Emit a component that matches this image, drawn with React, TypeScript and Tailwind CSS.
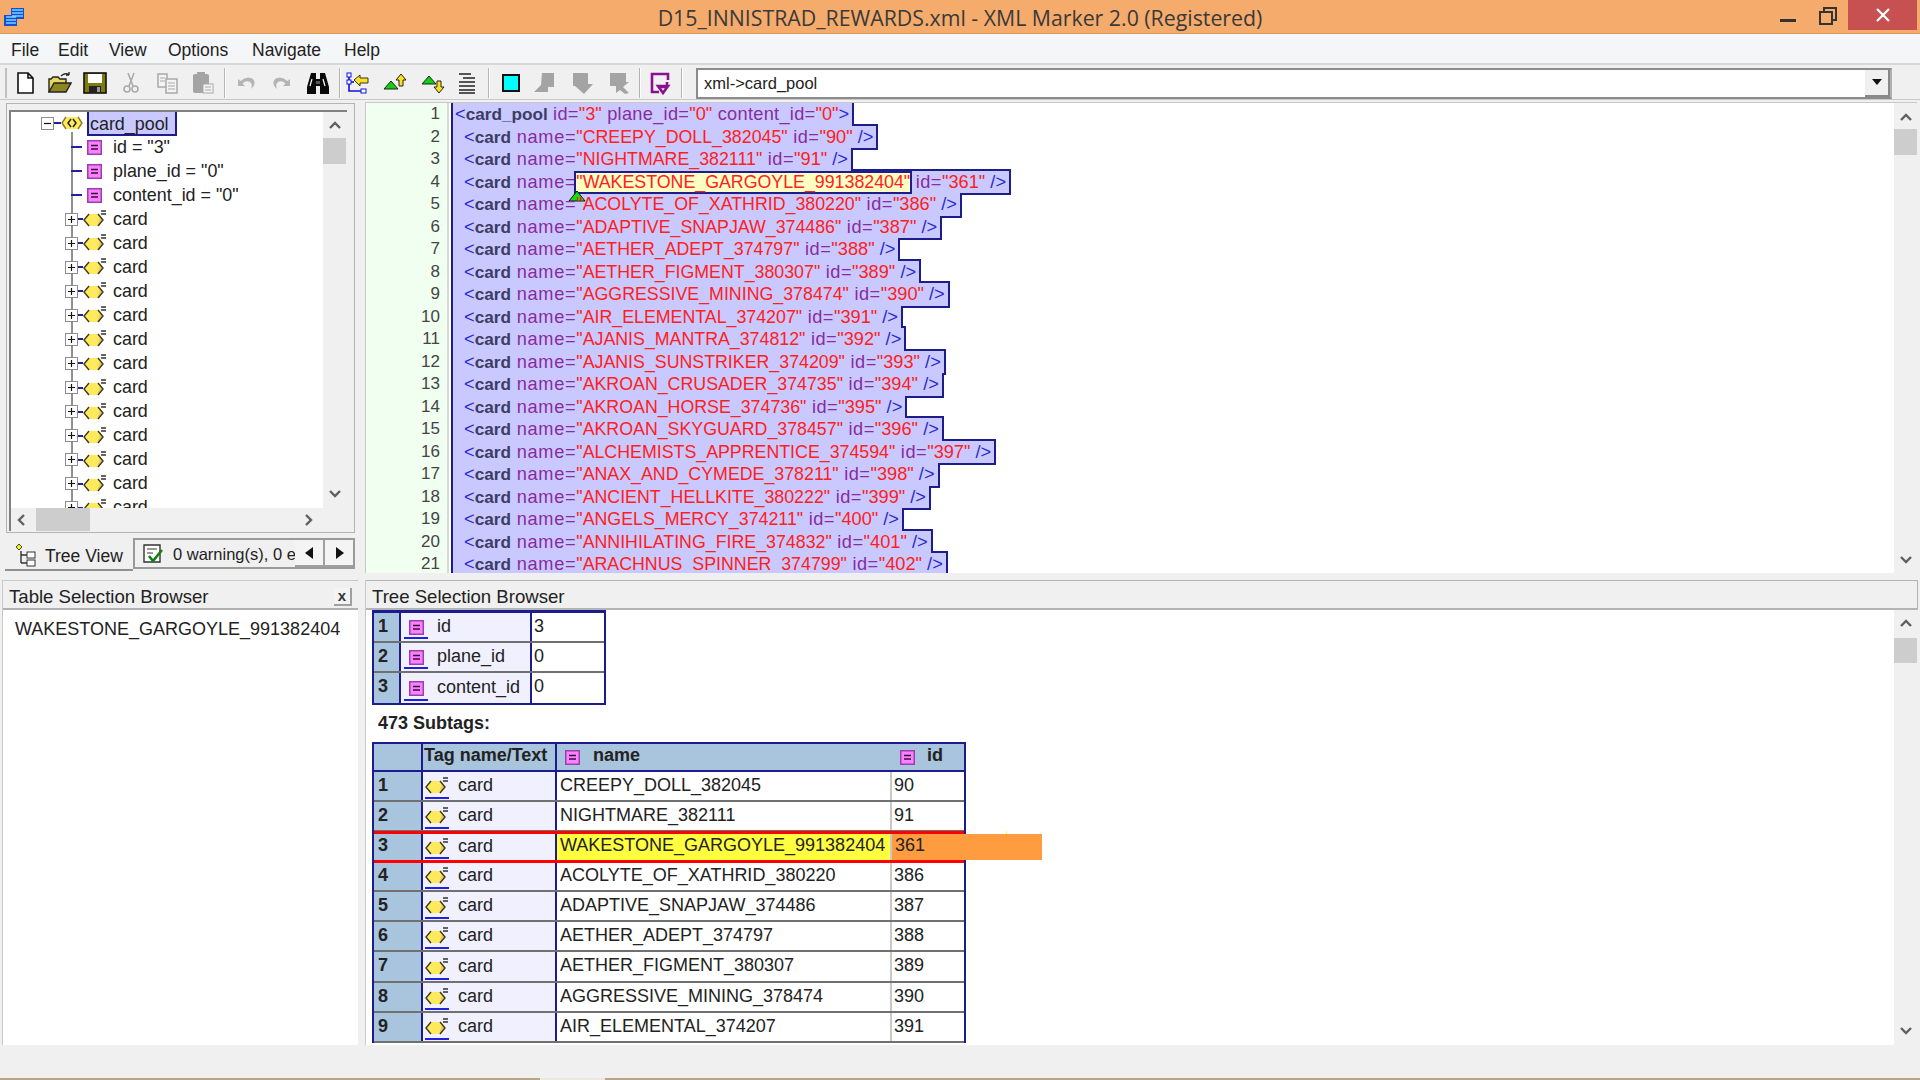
import React from 'react';

const editorRows = [
    ['CREEPY_DOLL_382045', '90'],
    ['NIGHTMARE_382111', '91'],
    ['WAKESTONE_GARGOYLE_991382404', '361'],
    ['ACOLYTE_OF_XATHRID_380220', '386'],
    ['ADAPTIVE_SNAPJAW_374486', '387'],
    ['AETHER_ADEPT_374797', '388'],
    ['AETHER_FIGMENT_380307', '389'],
    ['AGGRESSIVE_MINING_378474', '390'],
    ['AIR_ELEMENTAL_374207', '391'],
    ['AJANIS_MANTRA_374812', '392'],
    ['AJANIS_SUNSTRIKER_374209', '393'],
    ['AKROAN_CRUSADER_374735', '394'],
    ['AKROAN_HORSE_374736', '395'],
    ['AKROAN_SKYGUARD_378457', '396'],
    ['ALCHEMISTS_APPRENTICE_374594', '397'],
    ['ANAX_AND_CYMEDE_378211', '398'],
    ['ANCIENT_HELLKITE_380222', '399'],
    ['ANGELS_MERCY_374211', '400'],
    ['ANNIHILATING_FIRE_374832', '401'],
    ['ARACHNUS_SPINNER_374799', '402'],
];

const menuItems = [
    { name: 'File', cls: 'w-[47px]' },
    { name: 'Edit', cls: 'w-[51px]' },
    { name: 'View', cls: 'w-[59px]' },
    { name: 'Options', cls: 'w-[84px]' },
    { name: 'Navigate', cls: 'w-[92px]' },
    { name: 'Help', cls: 'w-[50px]' },
];

function Chevron({ dir }: { dir: 'up' | 'down' | 'left' | 'right' }) {
    const d = {
        up: 'M2 9 L7 4 L12 9',
        down: 'M2 5 L7 10 L12 5',
        left: 'M9 2 L4 7 L9 12',
        right: 'M5 2 L10 7 L5 12',
    }[dir];
    return (
        <svg width="14" height="14" viewBox="0 0 14 14">
            <path d={d} fill="none" stroke="#606060" strokeWidth="2.4" />
        </svg>
    );
}

function AttrIcon() {
    return (
        <svg width="15" height="15" viewBox="0 0 15 15" className="shrink-0">
            <rect x="0.75" y="0.75" width="13.5" height="13.5" fill="#ff80ff" stroke="#9a3fb0" strokeWidth="1.5" />
            <path d="M4 5.5 H11 M4 9 H11" stroke="#30103a" strokeWidth="1.5" />
        </svg>
    );
}

function TagIcon() {
    return (
        <svg width="24" height="20" viewBox="0 0 24 20" className="shrink-0">
            <path d="M1 11 L6 5 H15 L20 11 L15 17 H6 Z" fill="#ffe95c" />
            <path d="M14 17 L20 11 L17 8 Z" fill="#f6c860" />
            <path d="M6 5 L1 11 L6 17 M15 5 L20 11 L15 17" fill="none" stroke="#3a3a20" strokeWidth="1.4" />
            <path d="M18 2 H23 M18 5 H23" stroke="#333" strokeWidth="1.4" />
        </svg>
    );
}

function RootIcon() {
    return (
        <svg width="22" height="18" viewBox="0 0 22 18" className="shrink-0">
            <path d="M1 9 L6 3 H16 L21 9 L16 15 H6 Z" fill="#ffe95c" />
            <path d="M5 3 L1 9 L5 15 M17 3 L21 9 L17 15" fill="none" stroke="#8a7a20" strokeWidth="1.4" />
            <path d="M10 5 L7 9 L10 13 M12 5 L15 9 L12 13" fill="none" stroke="#222" strokeWidth="1.5" />
        </svg>
    );
}

function PlusBox({ minus }: { minus?: boolean }) {
    return (
        <svg width="13" height="13" viewBox="0 0 13 13" className="shrink-0">
            <rect x="0.5" y="0.5" width="12" height="12" fill="#fff" stroke="#8c8c8c" />
            <path d={minus ? 'M3 6.5 H10' : 'M3 6.5 H10 M6.5 3 V10'} stroke="#111" strokeWidth="1.2" />
        </svg>
    );
}

function ToolIcon({ kind, cls }: { kind: string; cls: string }) {
    const gray = '#a8a8a8';
    return (
        <svg width="24" height="24" viewBox="0 0 24 24" className={cls + ' shrink-0'}>
            {kind === 'new' && <path d="M5 2 H15 L20 7 V22 H5 Z M15 2 V7 H20" fill="#fff" stroke="#111" strokeWidth="1.6" />}
            {kind === 'open' && (
                <>
                    <path d="M1 21 V8 H3 L5 6 H10 L12 8 H18 V12" fill="#e8d85c" stroke="#222" strokeWidth="1.4" />
                    <path d="M1 21 L6 12 H23 L18 21 Z" fill="#8d8620" stroke="#222" strokeWidth="1.4" />
                    <path d="M13 5 Q17 1 21 4 M21 4 V1 M21 4 H18" fill="none" stroke="#222" strokeWidth="1.3" />
                </>
            )}
            {kind === 'save' && (
                <>
                    <rect x="1" y="2" width="22" height="20" fill="#7f7a10" stroke="#111" strokeWidth="1.6" />
                    <rect x="5" y="3" width="14" height="9" fill="#fff" />
                    <rect x="6" y="15" width="12" height="7" fill="#222" />
                    <rect x="14" y="16" width="3" height="5" fill="#9a9a9a" />
                </>
            )}
            {kind === 'cut' && (
                <>
                    <path d="M9 2 L14 15 M15 2 L10 15" stroke={gray} strokeWidth="1.5" fill="none" />
                    <circle cx="8" cy="18" r="3" fill="none" stroke={gray} strokeWidth="1.5" />
                    <circle cx="16" cy="18" r="3" fill="none" stroke={gray} strokeWidth="1.5" />
                </>
            )}
            {kind === 'copy' && (
                <>
                    <path d="M2 3 H11 V16 H2 Z" fill="#f4f4f4" stroke={gray} strokeWidth="1.5" />
                    <path d="M10 8 H21 V22 H10 Z" fill="#f4f4f4" stroke={gray} strokeWidth="1.5" />
                    <path d="M4 7 H9 M4 10 H9 M12 12 H19 M12 15 H19 M12 18 H19" stroke={gray} strokeWidth="1.2" />
                </>
            )}
            {kind === 'paste' && (
                <>
                    <rect x="2" y="3" width="16" height="19" rx="2" fill="#a4a4a4" />
                    <rect x="6" y="1" width="8" height="4" fill="#a4a4a4" />
                    <rect x="12" y="13" width="10" height="9" fill="#f4f4f4" stroke={gray} />
                    <path d="M14 16 H20 M14 19 H20" stroke={gray} />
                </>
            )}
            {kind === 'undo' && <path d="M4 8 V15 H11 L8.5 12.5 Q12 9 16 11 Q19 13 17 18 Q23 13 19 8 Q13 4 6.5 10 Z" fill="#b4b4b4" />}
            {kind === 'redo' && <path d="M20 8 V15 H13 L15.5 12.5 Q12 9 8 11 Q5 13 7 18 Q1 13 5 8 Q11 4 17.5 10 Z" fill="#b4b4b4" />}
            {kind === 'find' && (
                <>
                    <path d="M5 2 H10 V8 H14 V2 H19 L23 16 V23 H14 V15 H10 V23 H1 V16 Z" fill="#0a0a0a" />
                    <path d="M10 10 H14 V13 H10 Z" fill="#555" />
                    <path d="M4 15 L6 8 M17 8 L19 15" stroke="#fff" strokeWidth="1.2" />
                </>
            )}
            {kind === 'treearrow' && (
                <>
                    <path d="M3 4 V20 H15" fill="none" stroke="#1010e0" strokeWidth="1.6" />
                    <path d="M3 11 H8" stroke="#1010e0" strokeWidth="1.6" />
                    <rect x="1" y="2" width="4" height="4" fill="#fff" stroke="#1010e0" />
                    <rect x="1" y="9" width="4" height="4" fill="#fff" stroke="#1010e0" />
                    <rect x="15" y="18" width="5" height="4" fill="#fff" stroke="#1010e0" />
                    <path d="M8 9 L14 4 V7 H22 V12 H14 V15 Z" fill="#ffe020" stroke="#333" />
                </>
            )}
            {kind === 'up' && (
                <>
                    <path d="M1 18 L8 10 L15 18 Z" fill="#10d010" stroke="#222" />
                    <path d="M18 3 L23 9 H20 V15 H16 V9 H13 Z" fill="#ffe020" stroke="#222" />
                </>
            )}
            {kind === 'down' && (
                <>
                    <path d="M1 13 L8 5 L15 13 Z" fill="#10d010" stroke="#222" />
                    <path d="M18 22 L23 16 H20 V10 H16 V16 H13 Z" fill="#ffe020" stroke="#222" />
                </>
            )}
            {kind === 'lines' && <path d="M4 3 H16 M8 7 H20 M4 11 H20 M4 15 H20 M4 19 H20 M4 22 H20" stroke="#222" strokeWidth="1.7" />}
            {kind === 'cyan' && <rect x="4" y="4" width="16" height="16" fill="#00ffff" stroke="#111" strokeWidth="2" />}
            {kind === 'g1' && <path d="M10 2 H22 V16 H16 V21 H2 L9 14 Z" fill="#a4a4a4" />}
            {kind === 'g2' && <path d="M2 2 H17 V13 H22 L13 23 L4 15 L2 15 Z" fill="#a4a4a4" />}
            {kind === 'g3' && <path d="M2 2 H18 V11 H21 L15 16 L21 22 L17 23 L12 19 L8 22 V15 H2 Z" fill="#a4a4a4" />}
            {kind === 'purple' && <path d="M20 9 V3 H4 V21 H11 M11 16 L19 16 V11 M15 22 L20 15 H10 Z" fill="none" stroke="#8a1090" strokeWidth="2.6" />}
        </svg>
    );
}

function Sep({ cls }: { cls: string }) {
    return <div className={'w-[2px] h-[30px] bg-[#b4b4b4] border-r border-white shrink-0 ' + cls} />;
}

function EditorLine({ name, id, selected }: { name: string; id: string; selected?: boolean }) {
    return (
        <div className="relative w-fit h-[22.5px] pl-[11px] pr-[3px] leading-[22.5px] whitespace-pre">
            <span className="absolute inset-0 shadow-[0_0_0_2px_#1c1c8c] z-0" />
            <span className="absolute inset-0 bg-[#c9c9ff] z-10" />
            <span className="relative z-20">
                <span className="text-[#2a2ad0]">&lt;</span>
                <span className="font-bold text-[#3c3c64] text-[17.2px]">card</span>
                <span className="text-[#8a2aa0] tracking-[0.7px]"> name=</span>
                {selected ? (
                    <span className="relative">
                        <span className="absolute left-[-2px] right-[-2px] top-[-1px] bottom-[-2px] bg-[#ffffc4] border-2 border-[#1c1c8c]" />
                        <span className="relative text-[#ff2020] text-[17.8px]">"{name}"</span>
                        <svg width="18" height="12" viewBox="0 0 18 12" className="absolute left-[-8px] top-[18px]">
                            <path d="M1 11 L9 1 L17 11 Z" fill="#10e010" stroke="#111" />
                        </svg>
                    </span>
                ) : (
                    <span className="text-[#ff2020] text-[17.8px]">"{name}"</span>
                )}
                <span className="text-[#8a2aa0] tracking-[0.5px]"> id=</span>
                <span className="text-[#ff2020]">"{id}"</span>
                <span className="text-[#2a2ad0]"> /&gt;</span>
            </span>
        </div>
    );
}

function AttrRow({ n, name, value, last }: { n: number; name: string; value: string; last?: boolean }) {
    return (
        <div className={'flex h-[30px] items-stretch ' + (last ? '' : 'border-b-2 border-[#707070]')}>
            <div className="w-[27px] bg-[#a9c4dd] border-r-2 border-[#1c1c8c] pl-[4px] font-bold leading-[26px] shrink-0">{n}</div>
            <div className="relative w-[131px] bg-[#f0f0ff] border-r-2 border-[#1c1c8c] flex items-center pl-[8px] gap-[13px] shrink-0">
                <AttrIcon />
                <span className="leading-[26px] -mt-[2px]">{name}</span>
                <span className="absolute left-[3px] bottom-[2px] w-[24px] h-[2px] bg-[#2020e0]" />
            </div>
            <div className="flex-1 pl-[2px] leading-[26px]">{value}</div>
        </div>
    );
}

function CardRow({ n, name, id, hit }: { n: number; name: string; id: string; hit?: boolean }) {
    const lead = hit ? 'leading-[22px]' : 'leading-[26px]';
    return (
        <div className={'relative flex items-stretch shrink-0 ' + (hit ? 'border-y-[3px] border-[#ff0000] -my-[1px] h-[32px] z-10' : 'h-[30.1px] border-b-2 border-[#707070]')}>
            <div className={'w-[49px] bg-[#a9c4dd] border-r-2 border-[#1c1c8c] pl-[4px] font-bold shrink-0 ' + lead}>{n}</div>
            <div className="relative w-[134px] bg-[#f0f0ff] border-r-2 border-[#1c1c8c] flex items-center pl-[2px] gap-[9px] shrink-0">
                <TagIcon />
                <span className={'-mt-[2px] ' + lead}>card</span>
                <span className="absolute left-[2px] bottom-[1px] w-[24px] h-[2px] bg-[#2020e0]" />
            </div>
            <div className={'w-[335px] pl-[3px] border-r-2 border-[#c8c8c8] shrink-0 ' + lead + (hit ? ' bg-[#ffff40]' : '')}>{name}</div>
            <div className={'flex-1 pl-[2px] ' + lead}>{hit ? '' : id}</div>
            {hit && (
                <div className="absolute left-[518px] top-0 bottom-0 w-[150px] bg-[#ff9c40]">
                    <span className={'absolute left-[3px] top-0 ' + lead}>{id}</span>
                    <span className="absolute left-[114px] -top-[3px] w-[1px] h-[3px] bg-[#ffff40]" />
                </div>
            )}
        </div>
    );
}

export default function App() {
    return (
        <div className="w-[1920px] h-[1080px] bg-[#f0f0f0] flex flex-col overflow-hidden text-[18px] text-[#222] font-['Liberation_Sans',sans-serif]">
            {/* Title bar */}
            <div className="relative h-[34px] shrink-0 bg-[#f5ab6b] border-b border-[#d9975c] flex items-center justify-center">
                <svg width="20" height="20" viewBox="0 0 20 20" className="absolute left-[4px] top-[8px]">
                    <path d="M7 0 H20 V11 H13 V18 H0 V7 H7 Z" fill="#1050d8" />
                    <path d="M8 2 H19 M8 5 H19 M8 8 H19 M2 9 H12 M2 12 H12 M2 15 H12" stroke="#7ad0ff" strokeWidth="1.4" />
                </svg>
                <span className="font-['Open_Sans',sans-serif] text-[21.3px] text-[#3a3a3a] mt-[2px]">D15_INNISTRAD_REWARDS.xml - XML Marker 2.0 (Registered)</span>
                <div className="absolute right-[3px] top-0 flex items-start">
                    <div className="w-[16px] h-[3px] bg-[#333] mt-[19px] mr-[23px]" />
                    <svg width="18" height="18" viewBox="0 0 18 18" className="mt-[7px] mr-[11px]">
                        <path d="M5 5 V1 H17 V13 H13" fill="none" stroke="#333" strokeWidth="2" />
                        <rect x="1" y="5" width="12" height="12" fill="none" stroke="#333" strokeWidth="2" />
                    </svg>
                    <div className="w-[69px] h-[30px] bg-[#c75050] flex items-center justify-center">
                        <svg width="14" height="14" viewBox="0 0 14 14">
                            <path d="M1 1 L13 13 M13 1 L1 13" stroke="#fff" strokeWidth="2.2" />
                        </svg>
                    </div>
                </div>
            </div>

            {/* Menu */}
            <div className="h-[31px] shrink-0 bg-[#f5f6f8] border-b-2 border-[#d8d8d8] flex items-center pl-[11px] pt-[3px] text-[17.5px]">
                {menuItems.map((item) => (
                    <span key={item.name} className={item.cls}>{item.name}</span>
                ))}
            </div>

            {/* Toolbar */}
            <div className="h-[35px] shrink-0 bg-[#f0f0f0] border-b border-[#c8c8c8] flex items-center pl-[5px] pt-[2px]">
                <div className="w-[2px] h-[30px] bg-[#c0c0c0] shrink-0" />
                <ToolIcon kind="new" cls="ml-[6px]" />
                <ToolIcon kind="open" cls="ml-[11px]" />
                <ToolIcon kind="save" cls="ml-[11px]" />
                <ToolIcon kind="cut" cls="ml-[12px]" />
                <ToolIcon kind="copy" cls="ml-[13px]" />
                <ToolIcon kind="paste" cls="ml-[11px]" />
                <Sep cls="ml-[9px]" />
                <ToolIcon kind="undo" cls="ml-[8px]" />
                <ToolIcon kind="redo" cls="ml-[12px]" />
                <ToolIcon kind="find" cls="ml-[12px]" />
                <Sep cls="ml-[9px]" />
                <ToolIcon kind="treearrow" cls="ml-[5px]" />
                <ToolIcon kind="up" cls="ml-[13px]" />
                <ToolIcon kind="down" cls="ml-[14px]" />
                <ToolIcon kind="lines" cls="ml-[10px]" />
                <Sep cls="ml-[9px]" />
                <ToolIcon kind="cyan" cls="ml-[9px]" />
                <ToolIcon kind="g1" cls="ml-[9px]" />
                <ToolIcon kind="g2" cls="ml-[15px]" />
                <ToolIcon kind="g3" cls="ml-[13px]" />
                <Sep cls="ml-[7px]" />
                <ToolIcon kind="purple" cls="ml-[7px]" />
                <Sep cls="ml-[9px]" />
                <div className="ml-[13px] w-[1196px] h-[31px] shrink-0 bg-white border-2 border-[#8c8c8c] border-r-[#b0b0b0] flex items-center justify-between pl-[6px] text-[16.5px]">
                    <span>xml-&gt;card_pool</span>
                    <div className="w-[25px] h-[27px] bg-[#f0f0f0] border-r-2 border-b-2 border-[#888] flex items-center justify-center">
                        <svg width="12" height="8" viewBox="0 0 12 8"><path d="M1 1 H11 L6 7 Z" fill="#111" /></svg>
                    </div>
                </div>
            </div>

            {/* Upper panes */}
            <div className="h-[473px] shrink-0 flex">
                <div className="ml-[6px] w-[349px] pt-[3px] shrink-0 flex flex-col">
                    <div className="h-[430px] border border-[#b4b4b4] pt-[6px] pl-[2px] pr-[7px] shrink-0">
                        <div className="h-[421px] border-l-2 border-t-2 border-[#808080] flex flex-col">
                            <div className="h-[396px] flex shrink-0">
                                <div className="relative w-[312px] bg-white overflow-hidden text-[17.9px] shrink-0">
                                    <div className="absolute left-[60px] top-[20px] bottom-0 w-[2px] bg-[#909090]" />
                                    <div className="relative flex flex-col -mt-[1px]">
                                        <div className="flex items-center h-[24.06px] pl-[30px]">
                                            <PlusBox minus />
                                            <div className="w-[7px] h-[2px] bg-[#2020a0]" />
                                            <RootIcon />
                                            <span className="ml-[4px] h-[26px] w-[90px] pl-[1px] leading-[24px] bg-[#c9c9ff] border-2 border-[#1c1c8c] shrink-0">card_pool</span>
                                        </div>
                                        {['id = "3"', 'plane_id = "0"', 'content_id = "0"'].map((t) => (
                                            <div key={t} className="flex items-center h-[24.06px] pl-[60px]">
                                                <div className="w-[11px] h-[2px] bg-[#2020a0] shrink-0" />
                                                <div className="ml-[5px]"><AttrIcon /></div>
                                                <span className="ml-[11px] whitespace-pre">{t}</span>
                                            </div>
                                        ))}
                                        {Array.from({ length: 13 }, (_, i) => (
                                            <div key={i} className="flex items-center h-[24.06px] pl-[54px]">
                                                <PlusBox />
                                                <div className="w-[5px] h-[2px] bg-[#2020a0] shrink-0" />
                                                <TagIcon />
                                                <span className="ml-[6px]">card</span>
                                            </div>
                                        ))}
                                    </div>
                                </div>
                                <div className="relative w-[23px] bg-[#f0f0f0] flex flex-col items-center justify-between shrink-0 pt-[7px] pb-[8px]">
                                    <Chevron dir="up" />
                                    <div className="absolute top-[26px] left-0 w-full h-[26px] bg-[#cdcdcd]" />
                                    <Chevron dir="down" />
                                </div>
                            </div>
                            <div className="relative h-[23px] flex items-center justify-between pl-[4px] pr-[8px] bg-[#f0f0f0] w-[312px]">
                                <Chevron dir="left" />
                                <div className="absolute left-[25px] top-0 w-[54px] h-[23px] bg-[#cdcdcd]" />
                                <Chevron dir="right" />
                            </div>
                        </div>
                    </div>
                    <div className="flex h-[39px] pt-[5px] shrink-0 text-[16.5px]">
                        <div className="w-[128px] -ml-[1px] h-[33px] border-b-2 border-[#909090] flex items-center pl-[8px] gap-[6px] shrink-0">
                            <svg width="26" height="26" viewBox="0 0 26 26" className="shrink-0">
                                <path d="M6 3 L9 6 L6 9 L3 6 Z" fill="#ffee10" stroke="#444" />
                                <path d="M8 10 V22 M8 14 H14 M8 22 H14" stroke="#333" fill="none" strokeWidth="1.4" />
                                <rect x="14" y="11" width="8" height="6" fill="#fff" stroke="#333" />
                                <rect x="14" y="19" width="8" height="6" fill="#fff" stroke="#333" />
                            </svg>
                            <span className="whitespace-nowrap pt-[5px] text-[17.5px]">Tree View</span>
                        </div>
                        <div className="flex-1 h-[31px] border-2 border-[#9a9a9a] flex items-center pl-[8px] gap-[10px] overflow-hidden">
                            <svg width="20" height="20" viewBox="0 0 20 20" className="shrink-0">
                                <path d="M1 1 H17 V18 H1 Z" fill="#fff" stroke="#333" strokeWidth="1.4" />
                                <path d="M4 5 H14 M4 9 H10" stroke="#333" />
                                <path d="M6 12 L10 17 L19 6" fill="none" stroke="#108010" strokeWidth="2.6" />
                            </svg>
                            <span className="w-[123px] pt-[1px] whitespace-nowrap overflow-hidden shrink-0">0 warning(s), 0 error(s)</span>
                            <div className="flex -ml-[11px] shrink-0">
                                <div className="w-[30px] h-[27px] bg-[#f4f4f4] border-r-2 border-b-2 border-[#a0a0a0] flex items-center justify-center">
                                    <svg width="10" height="14" viewBox="0 0 10 14"><path d="M9 1 V13 L1 7 Z" fill="#111" /></svg>
                                </div>
                                <div className="w-[30px] h-[27px] bg-[#f4f4f4] border-r border-b-2 border-[#a0a0a0] flex items-center justify-center">
                                    <svg width="10" height="14" viewBox="0 0 10 14"><path d="M1 1 V13 L9 7 Z" fill="#111" /></svg>
                                </div>
                            </div>
                        </div>
                    </div>
                </div>

                {/* Editor */}
                <div className="ml-[10px] mr-[3px] mt-[2px] flex-1 border-t border-l border-[#c8c8c8] flex overflow-hidden">
                    <div className="w-[83px] bg-[#f0fff0] border-r-2 border-[#d8d8d8] shrink-0 pr-[7px] text-right text-[#444] text-[17px]">
                        {Array.from({ length: 21 }, (_, i) => (
                            <div key={i} className="h-[22.5px] leading-[22.5px]">{i + 1}</div>
                        ))}
                    </div>
                    <div className="flex-1 bg-white pl-[4px] text-[18.2px] overflow-hidden">
                        <div className="relative w-fit h-[22.5px] pl-[2px] pr-[3px] leading-[22.5px] whitespace-pre">
                            <span className="absolute inset-0 shadow-[0_0_0_2px_#1c1c8c] z-0" />
                            <span className="absolute inset-0 bg-[#c9c9ff] z-10" />
                            <span className="relative z-20">
                                <span className="text-[#2a2ad0]">&lt;</span>
                                <span className="font-bold text-[#3c3c64] text-[17.2px]">card_pool</span>
                                <span className="text-[#8a2aa0] tracking-[0.3px]"> id=</span>
                                <span className="text-[#ff2020]">"3"</span>
                                <span className="text-[#8a2aa0] tracking-[0.3px]"> plane_id=</span>
                                <span className="text-[#ff2020]">"0"</span>
                                <span className="text-[#8a2aa0] tracking-[0.3px]"> content_id=</span>
                                <span className="text-[#ff2020]">"0"</span>
                                <span className="text-[#2a2ad0]">&gt;</span>
                            </span>
                        </div>
                        {editorRows.map(([name, id]) => (
                            <EditorLine key={name} name={name} id={id} selected={id === '361'} />
                        ))}
                    </div>
                    <div className="relative w-[23px] bg-[#f0f0f0] flex flex-col items-center justify-between shrink-0 pt-[8px] pb-[7px]">
                        <Chevron dir="up" />
                        <div className="absolute top-[26px] left-0 w-full h-[26px] bg-[#cdcdcd]" />
                        <Chevron dir="down" />
                    </div>
                </div>
            </div>

            <div className="h-[7px] shrink-0" />

            {/* Lower panes */}
            <div className="h-[465px] shrink-0 flex">
                <div className="w-[356px] ml-[2px] shrink-0 flex flex-col border-l border-[#c8c8c8]">
                    <div className="h-[30px] flex items-center justify-between border-t border-[#c8c8c8] border-b-2 border-b-[#b0b0b0] pl-[6px] pr-[6px] pt-[4px] text-[18.6px] shrink-0">
                        <span>Table Selection Browser</span>
                        <span className="w-[18px] h-[18px] bg-[#f4f4f4] border-r-2 border-b-2 border-[#a0a0a0] leading-[15px] text-center text-[15px] font-bold text-[#333]">x</span>
                    </div>
                    <div className="flex-1 bg-white pl-[12px] pt-[6px]">WAKESTONE_GARGOYLE_991382404</div>
                </div>
                <div className="ml-[7px] flex-1 flex flex-col border-l border-[#c8c8c8]">
                    <div className="h-[30px] flex items-center border border-l-0 border-[#b4b4b4] border-b-2 pl-[6px] pt-[4px] text-[18.6px] shrink-0 mr-[2px]">Tree Selection Browser</div>
                    <div className="flex-1 flex bg-white overflow-hidden mr-[3px]">
                        <div className="flex-1 pl-[6px] overflow-hidden">
                            <div className="w-[234px] border-x-2 border-b-2 border-[#1c1c8c]">
                                <div className="h-[3px] bg-[#1c1c8c]" />
                                <AttrRow n={1} name="id" value="3" />
                                <AttrRow n={2} name="plane_id" value="0" />
                                <AttrRow n={3} name="content_id" value="0" last />
                            </div>
                            <div className="h-[37px] pl-[6px] font-bold leading-[37px]">473 Subtags:</div>
                            <div className="w-[594px] border-x-2 border-t-2 border-[#1c1c8c] flex flex-col">
                                <div className="flex h-[28px] bg-[#a9c4dd] border-b-2 border-[#1c1c8c] shrink-0 font-bold">
                                    <div className="w-[49px] border-r-2 border-[#1c1c8c] shrink-0" />
                                    <div className="w-[134px] border-r-2 border-[#1c1c8c] pl-[1px] whitespace-nowrap leading-[23px] shrink-0">Tag name/Text</div>
                                    <div className="w-[335px] flex items-center pl-[8px] gap-[13px] shrink-0"><AttrIcon /><span className="-mt-[3px]">name</span></div>
                                    <div className="flex items-center pl-[8px] gap-[12px]"><AttrIcon /><span className="-mt-[3px]">id</span></div>
                                </div>
                                <CardRow n={1} name="CREEPY_DOLL_382045" id="90" />
                                <CardRow n={2} name="NIGHTMARE_382111" id="91" />
                                <CardRow n={3} name="WAKESTONE_GARGOYLE_991382404" id="361" hit />
                                <CardRow n={4} name="ACOLYTE_OF_XATHRID_380220" id="386" />
                                <CardRow n={5} name="ADAPTIVE_SNAPJAW_374486" id="387" />
                                <CardRow n={6} name="AETHER_ADEPT_374797" id="388" />
                                <CardRow n={7} name="AETHER_FIGMENT_380307" id="389" />
                                <CardRow n={8} name="AGGRESSIVE_MINING_378474" id="390" />
                                <CardRow n={9} name="AIR_ELEMENTAL_374207" id="391" />
                            </div>
                        </div>
                        <div className="relative w-[23px] bg-[#f0f0f0] flex flex-col items-center justify-between shrink-0 pt-[7px] pb-[8px]">
                            <Chevron dir="up" />
                            <div className="absolute top-[28px] left-0 w-full h-[25px] bg-[#cdcdcd]" />
                            <Chevron dir="down" />
                        </div>
                    </div>
                </div>
            </div>

            {/* Status bar */}
            <div className="flex-1 bg-[#f0f0f0] relative">
                <div className="absolute left-0 right-0 bottom-0 h-[2px] bg-[#b8a488]" />
                <div className="absolute left-[540px] bottom-0 w-[65px] h-[2px] bg-[#ece8e0]" />
            </div>
        </div>
    );
}
